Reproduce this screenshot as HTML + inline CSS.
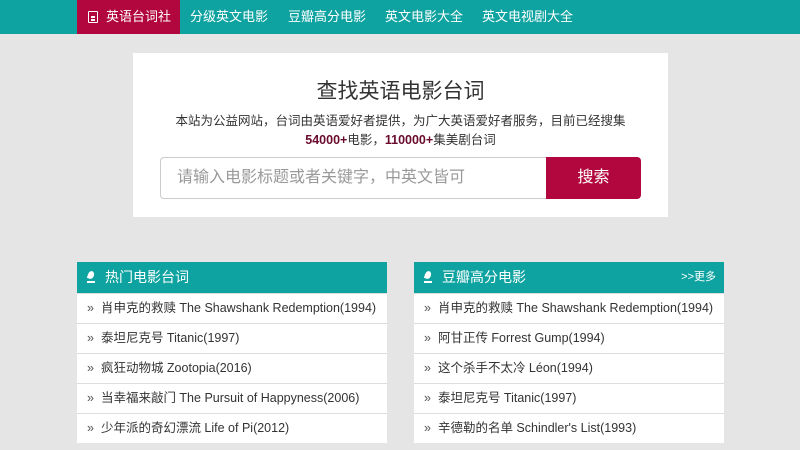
<!DOCTYPE html><html><head><meta charset="utf-8"><style>
*{margin:0;padding:0;box-sizing:border-box}
body{width:800px;height:450px;overflow:hidden;background:#e5e5e5;font-family:"Liberation Sans","Noto Sans CJK SC",sans-serif}
.nav{height:34px;background:#0ea3a0;position:relative}
.nav a{position:absolute;top:0;height:34px;line-height:34px;color:#fff;font-size:13px}
.act{left:77px;width:103px;background:#b1063e;padding-left:29px}
.act i{position:absolute;left:11px;top:11px;width:10px;height:12px;border:1.5px solid #fff;border-radius:1px}
.act i:before{content:"";position:absolute;left:1.5px;top:4px;width:4px;height:1.5px;background:#fff;box-shadow:0 3px 0 #fff}
.card{position:absolute;left:133px;top:53px;width:535px;height:164px;background:#fff;text-align:center}
.card h1{font-weight:normal;font-size:21px;color:#333;margin-top:25px;line-height:28px}
.card p{font-size:12.5px;color:#333;line-height:19px;margin-top:6px}
.card b{color:#6a0a2c}
.inp{position:absolute;left:27px;top:104px;width:386px;height:42px;border:1px solid #ccc;border-right:none;border-radius:4px 0 0 4px;text-align:left;padding-left:16px;line-height:40px;color:#999;font-size:16px}
.btn{position:absolute;left:413px;top:104px;width:95px;height:42px;background:#b1063e;border-radius:0 4px 4px 0;color:#fff;font-size:16px;line-height:42px}
.panel{position:absolute;top:262px;width:310px;background:#fff}
.ph{height:31px;background:#0ea3a0;color:#fff;font-size:14px;line-height:31px;padding-left:28px;position:relative}
.ph .ic{position:absolute;left:10px;top:9px;width:8px;height:12px;border-bottom:2px solid #fff}
.ph .ic:before{content:"";position:absolute;left:1px;top:0;width:6px;height:8px;background:#fff;border-radius:50% 50% 50% 0;transform:rotate(20deg)}
.ph .more{position:absolute;right:8px;top:0;font-size:11px}
.row{height:30px;border-top:1px solid #ddd;line-height:29px;font-size:12.5px;color:#333;padding-left:10px;white-space:nowrap}
.row:before{content:"»";margin-right:7px;color:#555}
</style></head><body>
<div class="nav">
<a class="act"><i></i>英语台词社</a>
<a style="left:190px">分级英文电影</a>
<a style="left:288px">豆瓣高分电影</a>
<a style="left:385px">英文电影大全</a>
<a style="left:482px">英文电视剧大全</a>
</div>
<div class="card"><h1>查找英语电影台词</h1>
<p>本站为公益网站，台词由英语爱好者提供，为广大英语爱好者服务，目前已经搜集<br><b>54000+</b>电影，<b>110000+</b>集美剧台词</p>
<div class="inp">请输入电影标题或者关键字，中英文皆可</div><div class="btn">搜索</div></div>
<div class="panel" style="left:77px"><div class="ph"><span class="ic"></span>热门电影台词</div>
<div class="row">肖申克的救赎 The Shawshank Redemption(1994)</div>
<div class="row">泰坦尼克号 Titanic(1997)</div>
<div class="row">疯狂动物城 Zootopia(2016)</div>
<div class="row">当幸福来敲门 The Pursuit of Happyness(2006)</div>
<div class="row">少年派的奇幻漂流 Life of Pi(2012)</div></div>
<div class="panel" style="left:414px"><div class="ph"><span class="ic"></span>豆瓣高分电影<span class="more">&gt;&gt;更多</span></div>
<div class="row">肖申克的救赎 The Shawshank Redemption(1994)</div>
<div class="row">阿甘正传 Forrest Gump(1994)</div>
<div class="row">这个杀手不太冷 Léon(1994)</div>
<div class="row">泰坦尼克号 Titanic(1997)</div>
<div class="row">辛德勒的名单 Schindler's List(1993)</div></div>
</body></html>
